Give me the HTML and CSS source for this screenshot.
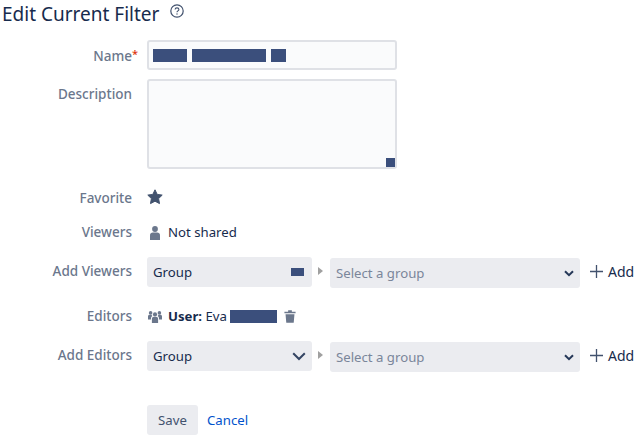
FILE: index.html
```html
<!DOCTYPE html>
<html lang="en">
<head>
<meta charset="utf-8">
<title>Edit Current Filter</title>
<link rel="stylesheet" href="styles.css">
</head>
<body>
<header class="title-row">
  <h1>Edit Current Filter</h1>
  <svg class="help" viewBox="0 0 14 14" width="14" height="14"><circle cx="7" cy="7" r="6.200" fill="none" stroke="#42526e" stroke-width="1.200"/><path d="M5.100 5.600c0-1.100.9-1.700 1.900-1.700s1.900.6 1.900 1.600c0 1.400-1.900 1.400-1.900 2.700" fill="none" stroke="#42526e" stroke-width="1.100"/><circle cx="7" cy="10" r=".7" fill="#42526e"/></svg>
</header>
<form class="form">
  <div class="row row-name">
    <label class="label label-name">Name<span class="req">*</span></label>
    <div class="input">
      <span class="bar bar-a"></span><span class="bar bar-b"></span><span class="bar bar-c"></span>
    </div>
  </div>
  <div class="row row-desc">
    <label class="label">Description</label>
    <div class="textarea"><span class="handle"></span></div>
  </div>
  <div class="row row-fav">
    <label class="label">Favorite</label>
    <svg class="star" viewBox="0 0 16 16" width="16" height="16"><path d="M8 .8l2.200 4.600 5 .7-3.600 3.500.9 5L8 12.200l-4.500 2.400.9-5L.8 6.100l5-.7z" fill="#42526e" stroke="#42526e" stroke-linejoin="round"/></svg>
  </div>
  <div class="row row-viewers">
    <label class="label">Viewers</label>
    <svg class="person" viewBox="0 0 10 14" width="10" height="14"><circle cx="5" cy="3" r="2.900" fill="#6b778c"/><path d="M0 14V9.200C0 7.400 1.200 6.400 2.800 6.400h4.400C8.800 6.400 10 7.400 10 9.200V14z" fill="#6b778c"/></svg>
    <span class="text">Not shared</span>
  </div>
  <div class="row row-add">
    <label class="label">Add Viewers</label>
    <div class="select select-type"><span>Group</span><span class="bar bar-small"></span></div>
    <span class="tri"></span>
    <div class="select select-group"><span class="ph">Select a group</span>
      <svg class="chev-s" viewBox="0 0 10 7" width="10" height="7"><path d="M1 1.200l4 4 4-4" fill="none" stroke="#253858" stroke-width="2"/></svg></div>
    <span class="add"><svg viewBox="0 0 13 13" width="13" height="13"><path d="M6.500 0v13M0 6.500h13" stroke="#42526e" stroke-width="1.300"/></svg>Add</span>
  </div>
  <div class="row row-editors">
    <label class="label">Editors</label>
    <svg class="group" viewBox="0 0 14 12" width="14" height="12"><circle cx="7" cy="3.400" r="2.100" fill="#6b778c"/><circle cx="2.600" cy="1.900" r="1.800" fill="#6b778c"/><circle cx="11.400" cy="1.900" r="1.800" fill="#6b778c"/><path d="M3.900 12V8c0-1.500 1-2.200 2-2.200h2.200c1 0 2 .7 2 2.200v4z" fill="#6b778c"/><path d="M0 8.500V5.400c0-1 .7-1.600 1.600-1.600h2c.2.500.4.800.8 1.200C3.500 5.500 3 6.500 3 7.600v.9zM14 8.500V5.400c0-1-.7-1.600-1.600-1.600h-2c-.2.500-.4.800-.8 1.200.9.500 1.400 1.500 1.400 2.600v.9z" fill="#6b778c"/></svg>
    <span class="text"><b>User:</b> Eva</span>
    <span class="bar bar-user"></span>
    <svg class="trash" viewBox="0 0 12 14" width="12" height="13"><path d="M0 1.800h12v1.800H0zM4 .3h4v1.500H4zM1.200 4.500h9.600L10 13.700H2z" fill="#6b778c"/></svg>
  </div>
  <div class="row row-add row-add-ed">
    <label class="label">Add Editors</label>
    <div class="select select-type"><span>Group</span>
      <svg class="chev-l" viewBox="0 0 14 9" width="14" height="9"><path d="M1.200 1.200L7 7l5.800-5.800" fill="none" stroke="#344563" stroke-width="2"/></svg></div>
    <span class="tri"></span>
    <div class="select select-group"><span class="ph">Select a group</span>
      <svg class="chev-s" viewBox="0 0 10 7" width="10" height="7"><path d="M1 1.200l4 4 4-4" fill="none" stroke="#253858" stroke-width="2"/></svg></div>
    <span class="add"><svg viewBox="0 0 13 13" width="13" height="13"><path d="M6.500 0v13M0 6.500h13" stroke="#42526e" stroke-width="1.300"/></svg>Add</span>
  </div>
  <div class="row row-actions">
    <span class="label"></span>
    <button type="button" class="save">Save</button>
    <a class="cancel" href="#">Cancel</a>
  </div>
</form>
</body>
</html>
```
FILE: styles.css
```css
* { box-sizing: border-box; }
html, body { margin: 0; padding: 0; }
body {
  width: 641px;
  height: 438px;
  overflow: hidden;
  background: #fff;
  color: #172b4d;
  font-family: "Noto Sans", "Open Sans", sans-serif;
  font-size: 13.2px;
}
.title-row {
  display: flex;
  align-items: center;
  gap: 11px;
  height: 24px;
  padding-left: 2px;
}
.title-row h1 {
  margin: 4px 0 0;
  font-size: 19px;
  font-weight: 400;
  line-height: 20px;
  color: #172b4d;
}
.help { margin-top: -2px; }
.form { padding-top: 16px; }
.row { display: flex; align-items: center; }
.label {
  flex: 0 0 132px;
  margin-right: 15px;
  text-align: right;
  color: #6b778c;
  font-weight: 500;
  font-size: 13.5px;
}
.label-name { position: relative; top: 1px; }
.req {
  position: absolute;
  left: 100%;
  top: -1px;
  color: #de350b;
  font-size: 11px;
}
.bar { display: block; background: #3b4f7c; }
.row-name { height: 30px; }
.input {
  width: 250px;
  height: 30px;
  display: flex;
  align-items: center;
  gap: 5px;
  padding-left: 4px;
  background: #fafbfc;
  border: 2px solid #dfe1e6;
  border-radius: 3px;
}
.bar-a { width: 34px; height: 13px; }
.bar-b { width: 74px; height: 13px; }
.bar-c { width: 15px; height: 13px; }
.row-desc { height: 90px; margin-top: 9px; align-items: flex-start; }
.row-desc .label { padding-top: 6px; }
.textarea {
  position: relative;
  width: 250px;
  height: 90px;
  background: #fafbfc;
  border: 2px solid #dfe1e6;
  border-radius: 3px;
}
.handle {
  position: absolute;
  right: 0;
  bottom: 0;
  width: 9px;
  height: 9px;
  background: #3b4f7c;
}
.row-fav { height: 20px; margin-top: 17px; }
.row-fav .label { padding-top: 3px; }
.row-fav .star { margin-top: 1px; }
.row-viewers { height: 20px; margin-top: 16px; }
.person { margin: 1px 8px 0 3px; }
.text { color: #172b4d; }
.row-add { height: 30px; margin-top: 15px; }
.row-add .label { margin-top: -2px; margin-bottom: 0; }
.select {
  display: flex;
  align-items: center;
  justify-content: space-between;
  height: 30px;
  padding: 0 6px;
  background: #ebecf0;
  border-radius: 3px;
  color: #172b4d;
}
.select-type { width: 165px; }
.bar-small { width: 13px; height: 8px; margin-right: 2px; }
.tri {
  width: 0;
  height: 0;
  margin: 0 7px 2px 6px;
  border-left: 5px solid #a0a0a0;
  border-top: 4px solid transparent;
  border-bottom: 4px solid transparent;
}
.select-group { width: 250px; margin-top: 2px; }
.ph { color: #7a869a; }
.add {
  display: flex;
  align-items: center;
  gap: 5px;
  margin-left: 10px;
  margin-top: -1px;
  color: #172b4d;
  font-size: 14px;
}
.row-editors { height: 20px; margin-top: 19px; }
.group { margin: 1px 6px 0 1px; }
.bar-user { width: 47px; height: 13px; margin-left: 3px; }
.trash { margin-left: 7px; }
.row-add-ed { margin-top: 15px; }
.row-actions { margin-top: 34px; height: 30px; }
.save {
  width: 51px;
  height: 30px;
  padding: 0;
  border: 0;
  border-radius: 3px;
  background: #ebecf0;
  color: #42526e;
  font: inherit;
}
.cancel {
  margin-left: 9px;
  color: #0052cc;
  text-decoration: none;
}
```
